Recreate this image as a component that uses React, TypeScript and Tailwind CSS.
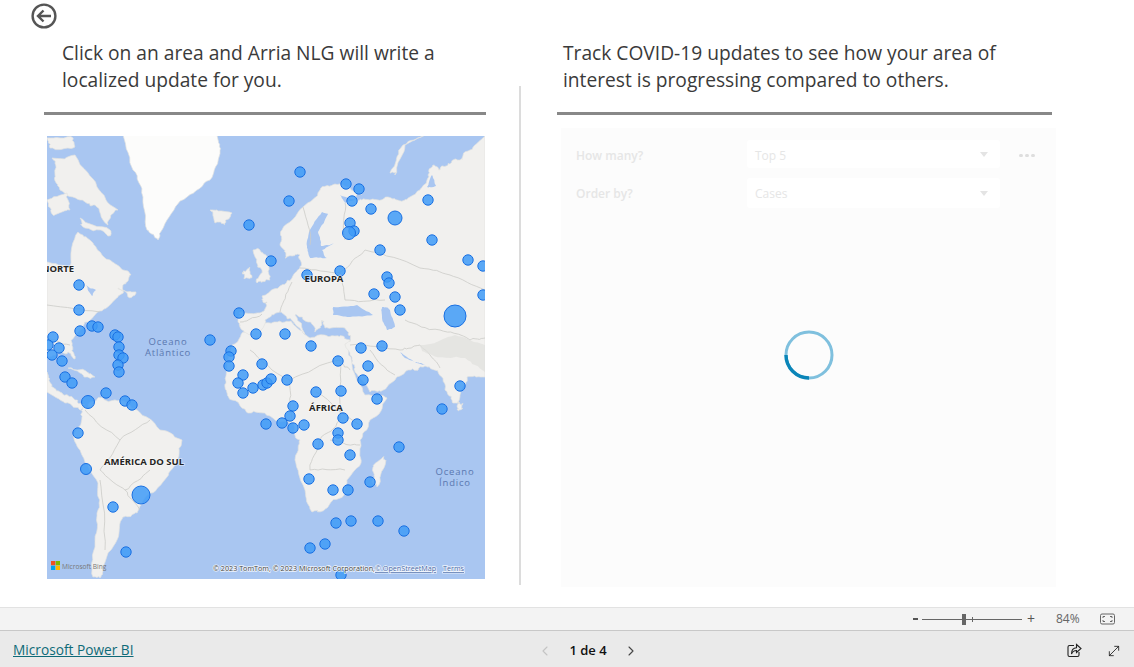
import React from "react";
import { ChevronLeft, ChevronRight, MoveDiagonal } from "lucide-react";

type B = [number, number, number?];
const bubbles: B[] = [
  [300,172],[346,184],[359,189],[289,201],[352,201],[371,209],[395,218,7],[428,200],[350,223],[354,231],[349,233,6.5],[432,240],[380,250],[468,260],[483,266],[271,261],[249,225],[307,275],[340,271],[387,277],[389,283],[374,294],[395,297],[400,310],[483,295],[455,316,11],[285,334],[311,346],[361,348],[382,346],[338,361],
  [79,285],[79,310],[80,331],[92,326],[98,327],[53,337],[48,345],[59,348],[52,355],[62,361],[115,335],[118,337],[119,347],[119,355],[123,358],[118,365],[119,372],[210,340],[239,313],[256,334],[231,351],[229,357],[229,366],
  [65,377],[72,383],[88,402,6.5],[106,393],[125,401],[132,405],[78,433],[86,469,5.5],[141,495,9],[113,507],[126,552],[243,375],[238,383],[253,388],[243,393],[263,385],[267,383],[271,379],[262,364],[266,424],
  [368,366],[363,380],[287,380],[316,392],[341,391],[377,399],[460,386],[442,409],[293,406],[290,416],[282,423],[293,428],[304,425],[343,418],[357,424],[338,433],[338,440],[318,444],[399,447],[350,455],[309,479],[333,490],[348,490],[370,482],[336,523],[351,521],[378,521],[404,531],[325,544],[310,548],[341,575],
];

const land = [
  "123,135 217,135 220,150 210,180 187,197 167,220 158,240 147,230 143,197 133,170",
  "47,262 70,268 78,232 93,243 110,260 131,275 124,284 118,297 103,310 88,322 78,332 72,345 75,359 68,352 60,352 47,358",
  "47,372 52,385 60,392 75,400 85,405 80,410 65,403 47,392",
  "83,407 90,402 103,398 120,400 137,410 160,430 182,440 177,460 167,477 150,493 137,513 123,517 117,540 103,567 100,578 93,577 95,547 97,513 98,483 80,450 73,435 82,417",
  "232,345 245,332 262,322 285,322 295,326 310,338 335,336 350,340 352,365 365,395 387,398 370,420 360,440 361,463 347,483 344,495 327,508 312,512 305,490 295,460 300,440 293,423 270,416 248,413 232,400 225,384 227,365",
  "240,312 262,312 267,302 262,296 280,286 292,278 300,268 300,255 285,258 280,245 282,230 303,207 320,190 335,184 350,188 362,194 355,200 370,200 388,197 405,200 420,190 428,175 433,165 440,170 448,165 460,160 470,150 485,136 485,377 467,377 460,395 453,403 445,390 438,372 425,366 408,370 387,387 370,392 355,372 352,360 345,345 350,335 345,328 325,328 322,320 315,332 308,322 295,315 305,335 290,318 280,312 265,320 258,338 244,332 238,322",
  "383,457 386,460 377,487 372,483 373,467",
  "459,402 462,405 459,410 457,406",
  "210,210 232,213 225,224 215,223",
  "253,250 262,252 270,263 270,280 257,283 262,270",
  "242,273 250,267 252,277 244,279",
  "47,138 73,138 73,148 50,148",
  "52,158 75,155 97,187 118,210 108,225 95,205 80,200 60,190 55,175",
  "47,200 67,193 70,210 53,215",
  "80,218 110,230 108,236 85,228",
  "118,288 136,292 130,298",
  "68,368 84,370 95,377 82,374",
  "390,173 403,145 425,135 405,145 395,175",
];
const water = [
  "322,212 328,214 318,232 321,246 335,243 322,250 327,258 310,258 307,248 309,232",
  "333,307 357,305 373,315 350,317 333,315",
  "382,307 390,310 395,327 387,330 382,318",
  "400,352 415,362 425,365 405,358",
  "340,195 356,200 345,203",
  "427,187 432,175 436,186",
  "86,285 96,290 92,296",
];
const borders = [
  "240,322 262,314", "280,312 292,282", "300,268 340,272 345,300", "340,272 365,250 420,268 450,275 485,290", "345,300 385,300", "405,320 440,330 470,340 485,338",
  "350,345 400,350 420,345 440,368", "370,350 395,375",
  "250,350 290,380 340,360 350,370", "290,380 292,420", "340,360 340,420 320,440 310,470 345,470", "316,392 360,425", "330,440 360,445",
  "85,410 120,440 150,420", "120,440 100,470 125,490 140,510", "100,480 105,550", "125,490 150,470",
  "47,305 100,312", "47,338 70,345", "303,207 310,245", "345,203 345,240",
];

// Roughens a coarse outline so that coasts and borders read as hand-drawn map lines.
function rough(points: string, closed: boolean, amp: number) {
  let pts = points.split(" ").map((p) => p.split(",").map(Number));
  let n = 1;
  for (let pass = 0; pass < 3; pass++) {
    const next: number[][] = [];
    const count = closed ? pts.length : pts.length - 1;
    for (let i = 0; i < count; i++) {
      const a = pts[i];
      const b = pts[(i + 1) % pts.length];
      const s1 = Math.sin(a[0] * 12.9898 + a[1] * 78.233 + n) * 43758.5453;
      const s2 = Math.sin(b[0] * 39.346 + a[1] * 11.135 + n) * 24634.6345;
      const a1 = (s1 - Math.floor(s1) - 0.5) * amp;
      const a2 = (s2 - Math.floor(s2) - 0.5) * amp;
      const edge = a[0] <= 47 || a[0] >= 485 || a[1] <= 136 || b[0] <= 47 || b[0] >= 485 || b[1] <= 136;
      next.push(a, [(a[0] + b[0]) / 2 + (edge ? 0 : a1), (a[1] + b[1]) / 2 + (edge ? 0 : a2)]);
    }
    if (!closed) next.push(pts[pts.length - 1]);
    pts = next;
    amp *= 0.6;
    n++;
  }
  return pts.map((p) => `${p[0].toFixed(1)},${p[1].toFixed(1)}`).join(" ");
}

const Arrow = () => (
  <svg width="26" height="26" viewBox="0 0 26 26" fill="none" stroke="#555" strokeWidth="2.4">
    <circle cx="13" cy="13" r="11.4" />
    <path d="M20 13H7M12.5 7.5L7 13l5.5 5.5" />
  </svg>
);

function MapVisual() {
  return (
    <svg viewBox="47 136 438 443" className="w-full h-full block" style={{ fontFamily: '"Open Sans", sans-serif' }}>
      <defs>
        <filter id="soft"><feGaussianBlur stdDeviation="0.55" /></filter>
      </defs>
      <rect x="47" y="136" width="438" height="443" fill="#a9c6f1" />
      <g filter="url(#soft)">
        {land.map((p, i) => (
          <polygon key={i} points={rough(p, true, 5)} fill={i === 0 ? "#fcfcfb" : "#f1f0ee"} stroke="#e2e2df" strokeWidth="0.7" strokeLinejoin="round" />
        ))}
        {water.map((p, i) => (
          <polygon key={i} points={rough(p, true, 2)} fill="#a9c6f1" />
        ))}
        {borders.map((d, i) => (
          <polyline key={i} points={rough(d, false, 5)} fill="none" stroke="#cbcbc8" strokeWidth="0.8" />
        ))}
        <polygon points={rough("420,345 455,335 485,345 485,372 465,358 430,354", true, 5)} fill="#e0e0dd" opacity="0.7" />
      </g>
      {bubbles.map(([x, y, r], i) => (
        <circle key={i} cx={x} cy={y} r={r ?? 5.2} fill="#3f9bf7" fillOpacity="0.85" stroke="#1a70e2" strokeWidth="1" />
      ))}
      <g fontWeight="700" fontSize="9.5" fill="#252423" textAnchor="middle" stroke="#ffffff" strokeOpacity="0.5" strokeWidth="1.6" paintOrder="stroke">
        <text x="324" y="282">EUROPA</text>
        <text x="326" y="411">ÁFRICA</text>
        <text x="144" y="465">AMÉRICA DO SUL</text>
        <text x="58" y="272">NORTE</text>
      </g>
      <g fontSize="9.5" fill="#5a78b0" textAnchor="middle" letterSpacing="0.8">
        <text x="168" y="345">Oceano</text>
        <text x="168" y="356">Atlântico</text>
        <text x="455" y="475">Oceano</text>
        <text x="455" y="486">Índico</text>
      </g>
      <rect x="51" y="561" width="4.3" height="4.3" fill="#f25022" />
      <rect x="55.7" y="561" width="4.3" height="4.3" fill="#7fba00" />
      <rect x="51" y="565.7" width="4.3" height="4.3" fill="#00a4ef" />
      <rect x="55.7" y="565.7" width="4.3" height="4.3" fill="#ffb900" />
      <text x="62" y="569" fontSize="6.6" fill="#777">Microsoft Bing</text>
      <g fontSize="7.2" stroke="#ffffff" strokeOpacity="0.8" strokeWidth="1.5" paintOrder="stroke">
        <text x="213" y="571" fill="#444">© 2023 TomTom, © 2023 Microsoft Corporation,</text>
        <text x="375" y="571" fill="#4a6aa8" textDecoration="underline">© OpenStreetMap</text>
        <text x="443" y="571" fill="#4a6aa8" textDecoration="underline">Terms</text>
      </g>
    </svg>
  );
}

const Caret = () => <span className="w-0 h-0 border-x-[4px] border-x-transparent border-t-[5px] border-t-[#e4e4e4] mr-[12px]" />;

function Slicer({ label, value, box, text }: { label: string; value: string; box: string; text: string }) {
  return (
    <div className="flex items-center">
      <span className={`w-[171px] text-[12px] font-semibold text-[#e6e6e6] ${text}`}>{label}</span>
      <div className={`w-[253px] ${box} bg-white rounded-[3px] flex items-center justify-between pl-[8px]`}>
        <span className={`text-[12px] text-[#e6e6e6] ${text}`}>{value}</span>
        <Caret />
      </div>
    </div>
  );
}

export default function App() {
  return (
    <div className="w-[1134px] h-[667px] flex flex-col bg-white overflow-hidden" style={{ fontFamily: '"Open Sans", sans-serif' }}>
      <main className="h-[607px] flex">
        <section className="w-[475px] ml-[44px] shrink-0 flex flex-col">
          <div className="h-[33px] -ml-[13px] pt-[3px]"><Arrow /></div>
          <p className="ml-[18px] h-[79px] pt-[6px] text-[19.2px] leading-[27px] text-[#3a3a3a]">
            Click on an area and Arria NLG will write a<br />localized update for you.
          </p>
          <div className="w-[442px] h-[3px] bg-[#888]" />
          <div className="w-[438px] h-[443px] ml-[3px] mt-[21px]"><MapVisual /></div>
        </section>
        <div className="w-[2px] h-[499px] mt-[86px] bg-[#dcdcdc] shrink-0" />
        <section className="ml-[36px] w-[500px] pt-[33px] flex flex-col">
          <p className="ml-[6px] h-[79px] pt-[6px] text-[19.2px] leading-[27px] text-[#3a3a3a] whitespace-nowrap">
            Track COVID-19 updates to see how your area of<br />interest is progressing compared to others.
          </p>
          <div className="w-[495px] h-[3px] bg-[#888]" />
          <div className="relative ml-[4px] mt-[13px] w-[495px] h-[459px] bg-[#fcfcfc] pl-[15px] pt-[12px]">
            <Slicer label="How many?" value="Top 5" box="h-[28px]" text="pt-[4px]" />
            <div className="h-[10px]" />
            <Slicer label="Order by?" value="Cases" box="h-[30px]" text="pt-[2px]" />
            <div className="absolute left-[458px] top-[26px] flex gap-[2px]">
              <span className="w-[4px] h-[3px] rounded-full bg-[#dedede]" />
              <span className="w-[4px] h-[3px] rounded-full bg-[#dedede]" />
              <span className="w-[4px] h-[3px] rounded-full bg-[#dedede]" />
            </div>
            <svg className="absolute left-[223px] top-[202px]" width="50" height="50" viewBox="0 0 50 50" fill="none">
              <circle cx="25" cy="25" r="23" stroke="#7fc0de" strokeWidth="3" />
              <path d="M2 25A23 23 0 0 0 25 48" stroke="#0a85b8" strokeWidth="3.4" />
            </svg>
          </div>
        </section>
      </main>
      <div className="h-[24px] border-y border-t-[#e2e2e2] border-b-[#c8c8c8] bg-[#f3f3f3] flex items-center justify-end text-[#666]">
        <span className="w-[5px] h-[2px] bg-[#555] mr-[4px]" />
        <div className="relative w-[100px] h-[1px] bg-[#666] flex items-center">
          <span className="absolute left-[40px] w-[4px] h-[11px] bg-[#666]" />
          <span className="absolute left-[50px] w-[1px] h-[5px] bg-[#666]" />
        </div>
        <span className="ml-[5px] w-[10px] text-[14px] leading-none text-[#555]">+</span>
        <span className="ml-[19px] w-[30px] text-[12px] text-[#666]" >84%</span>
        <svg className="ml-[14px] mr-[19px]" width="15" height="12" viewBox="0 0 15 12" fill="none" stroke="#666">
          <rect x="0.5" y="1" width="14" height="10" rx="1.5" />
          <path d="M3 5V3.5H5M12 5V3.5H10M3 7V8.5H5M12 7V8.5H10" />
        </svg>
      </div>
      <footer className="h-[36px] bg-[#eaeaea] flex items-center pt-[3px]">
        <a className="ml-[13px] w-[120px] text-[13.7px] font-medium text-[#0e6a78] underline whitespace-nowrap">Microsoft Power BI</a>
        <div className="ml-[404px] w-[102px] flex items-center justify-between">
          <ChevronLeft size={16} color="#c4c4c4" strokeWidth={1.6} />
          <span className="text-[13px] font-semibold text-[#111] whitespace-nowrap">1 de 4</span>
          <ChevronRight size={16} color="#444" strokeWidth={1.6} />
        </div>
        <div className="ml-auto flex items-center gap-[24px] mr-[12px]">
          <svg width="15" height="15" viewBox="0 0 15 15" fill="none" stroke="#222" strokeWidth="1.1">
            <path d="M7 2.5H2.5a1.5 1.5 0 0 0-1.5 1.5v8a1.5 1.5 0 0 0 1.5 1.5h8a1.5 1.5 0 0 0 1.5-1.5V9" />
            <path d="M9.5 1.5L14 5.5l-4.5 4V7.5C7 7.5 5.5 8.5 4.5 11c0-3.5 2-6 5-6.2z" />
          </svg>
          <MoveDiagonal size={16} color="#222" strokeWidth={1.3} />
        </div>
      </footer>
    </div>
  );
}
